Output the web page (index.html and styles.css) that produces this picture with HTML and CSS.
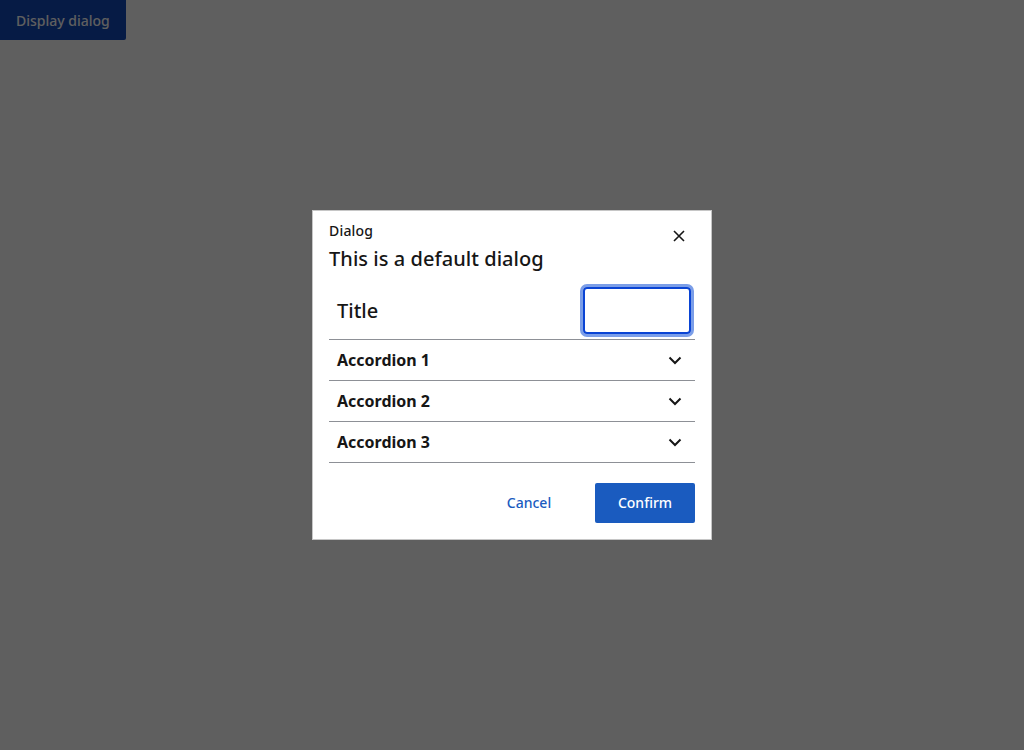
FILE: index.html
```html
<!DOCTYPE html>
<html lang="en">
<head>
<meta charset="utf-8">
<title>Dialog</title>
<link rel="stylesheet" href="styles.css">
</head>
<body>
<button class="trigger" type="button">Display dialog</button>
<div class="overlay">
  <div class="dialog" role="dialog" aria-labelledby="dlg-title">
    <div class="dialog-header">
      <div class="dialog-titles">
        <div class="dialog-label">Dialog</div>
        <h2 class="dialog-heading" id="dlg-title">This is a default dialog</h2>
      </div>
      <button class="close-btn" type="button" aria-label="Close">
        <svg width="12" height="12" viewBox="0 0 12 12"><path d="M1 1 L11 11 M11 1 L1 11" stroke="#161616" stroke-width="1.6" fill="none"/></svg>
      </button>
    </div>
    <div class="dialog-body">
      <div class="field-row">
        <label class="field-label" for="title-input">Title</label>
        <div class="input-ring"><input class="field-input" id="title-input" type="text"></div>
      </div>
      <div class="accordion">
        <div class="acc-item"><span class="acc-title">Accordion 1</span><svg class="chev" width="14" height="9" viewBox="0 0 14 9"><path d="M1.5 1.5 L7 7 L12.5 1.5" stroke="#161616" stroke-width="2" fill="none"/></svg></div>
        <div class="acc-item"><span class="acc-title">Accordion 2</span><svg class="chev" width="14" height="9" viewBox="0 0 14 9"><path d="M1.5 1.5 L7 7 L12.5 1.5" stroke="#161616" stroke-width="2" fill="none"/></svg></div>
        <div class="acc-item"><span class="acc-title">Accordion 3</span><svg class="chev" width="14" height="9" viewBox="0 0 14 9"><path d="M1.5 1.5 L7 7 L12.5 1.5" stroke="#161616" stroke-width="2" fill="none"/></svg></div>
      </div>
    </div>
    <div class="dialog-footer">
      <button class="btn btn-ghost" type="button">Cancel</button>
      <button class="btn btn-primary" type="button">Confirm</button>
    </div>
  </div>
</div>
</body>
</html>
```
FILE: styles.css
```css
* { box-sizing: border-box; }
html, body {
  margin: 0;
  padding: 0;
  height: 100%;
}
body {
  font-family: "Noto Sans", "Open Sans", sans-serif;
  background: #ffffff;
  color: #161616;
}
.trigger {
  display: block;
  width: 126px;
  height: 40px;
  border: none;
  border-radius: 0 0 2px 0;
  background: #1048b8;
  color: #ffffff;
  font-family: inherit;
  font-size: 14px;
  font-weight: 500;
  padding: 0 16px;
  white-space: nowrap;
  text-align: left;
}
.overlay {
  position: fixed;
  inset: 0;
  background: rgba(0, 0, 0, 0.627);
  display: flex;
  align-items: center;
  justify-content: center;
}
.dialog {
  width: 400px;
  background: #ffffff;
  border: 1px solid #c6c6c6;
  padding: 10px 16px 16px;
}
.dialog-header {
  display: flex;
  justify-content: space-between;
  align-items: flex-start;
}
.dialog-label {
  font-size: 14px;
  line-height: 20px;
  font-weight: 500;
  letter-spacing: 0.2px;
}
.dialog-heading {
  margin: 4px 0 0;
  font-size: 20px;
  line-height: 28px;
  font-weight: 500;
  letter-spacing: 0.05px;
}
.close-btn {
  width: 24px;
  height: 24px;
  margin-top: 3px;
  margin-right: 4px;
  border: none;
  background: transparent;
  padding: 0;
  display: flex;
  align-items: center;
  justify-content: center;
}
.dialog-body {
  margin-top: 6px;
}
.field-row {
  display: flex;
  align-items: center;
  justify-content: space-between;
  padding: 5px 1px 2px 8px;
  border-bottom: 1px solid #8d9096;
}
.field-label {
  font-size: 20px;
  font-weight: 500;
}
.input-ring {
  border: 3px solid #7b9ee8;
  border-radius: 7px;
}
.field-input {
  display: block;
  width: 108px;
  height: 47px;
  border: 2px solid #0a44d4;
  border-radius: 4px;
  outline: none;
  background: #fff;
}
.acc-item {
  display: flex;
  align-items: center;
  justify-content: space-between;
  height: 41px;
  padding: 0 13px 0 8px;
  border-bottom: 1px solid #8d9096;
}
.acc-title {
  font-size: 16px;
  font-weight: 700;
}
.dialog-footer {
  display: flex;
  justify-content: flex-end;
  gap: 16px;
  margin-top: 20px;
}
.btn {
  min-width: 100px;
  height: 40px;
  border: none;
  border-radius: 2px;
  font-family: inherit;
  font-size: 14px;
  font-weight: 500;
  padding: 0 16px 1px;
}
.btn-ghost {
  background: transparent;
  color: #1a5bbf;
}
.btn-primary {
  background: #1a5bbf;
  color: #ffffff;
}
```
